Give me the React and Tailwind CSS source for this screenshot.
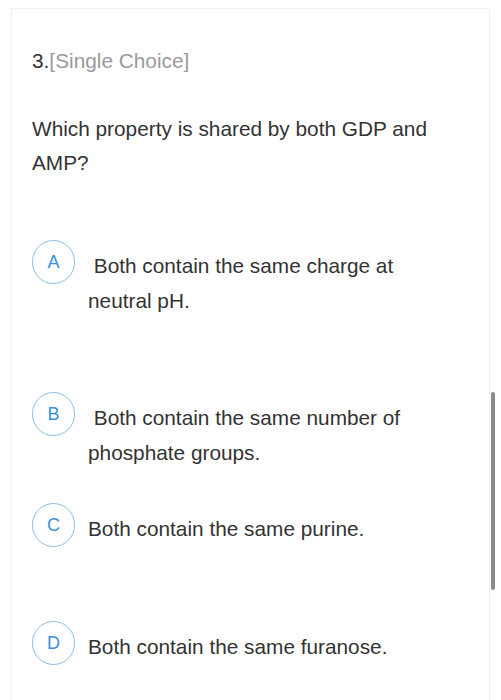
import React from 'react';

// Single choice question card
const options = [
  { key: 'A', text: '\u00a0Both contain the same charge at neutral pH.', mb: 'mb-[74px]' },
  { key: 'B', text: '\u00a0Both contain the same number of phosphate groups.', mb: 'mb-[33px]' },
  { key: 'C', text: 'Both contain the same purine.', mb: 'mb-[74px]' },
  { key: 'D', text: 'Both contain the same furanose.', mb: 'mb-[40px]' },
];

function Option({ letter, text, mb }) {
  return (
    <div className={`flex items-start ${mb}`}>
      <div className="w-[43px] h-[44px] shrink-0 rounded-full border border-[#8fbde6] flex items-center justify-center text-[18px] text-[#3a8fdd]">
        {letter}
      </div>
      <div className="ml-[13px] pt-[8px] w-[365px] text-[20.8px] leading-[35px] text-[#333]">
        {text}
      </div>
    </div>
  );
}

export default function App() {
  return (
    <div
      className="relative bg-white h-[700px] overflow-hidden pt-[8px] px-[11px]"
      style={{ fontFamily: '"Liberation Sans", Arial, sans-serif' }}
    >
      <div className="border border-[#f1f1f1] h-[720px] pl-[20px] pt-[37px]">
        <div className="text-[20.8px] leading-[30px]">
          <span className="text-[#333]">3.</span>
          <span className="text-[#9a9a9a]">[Single Choice]</span>
        </div>
        <div className="mt-[36px] w-[420px] text-[20.8px] leading-[34px] text-[#333]">
          Which property is shared by both GDP and AMP?
        </div>
        <div className="mt-[60px]">
          {options.map((o) => (
            <Option key={o.key} letter={o.key} text={o.text} mb={o.mb} />
          ))}
        </div>
      </div>
      {/* scrollbar */}
      <div className="absolute left-[491px] top-[392px] w-[4px] h-[198px] rounded-full bg-[#8a8a8a]" />
    </div>
  );
}
